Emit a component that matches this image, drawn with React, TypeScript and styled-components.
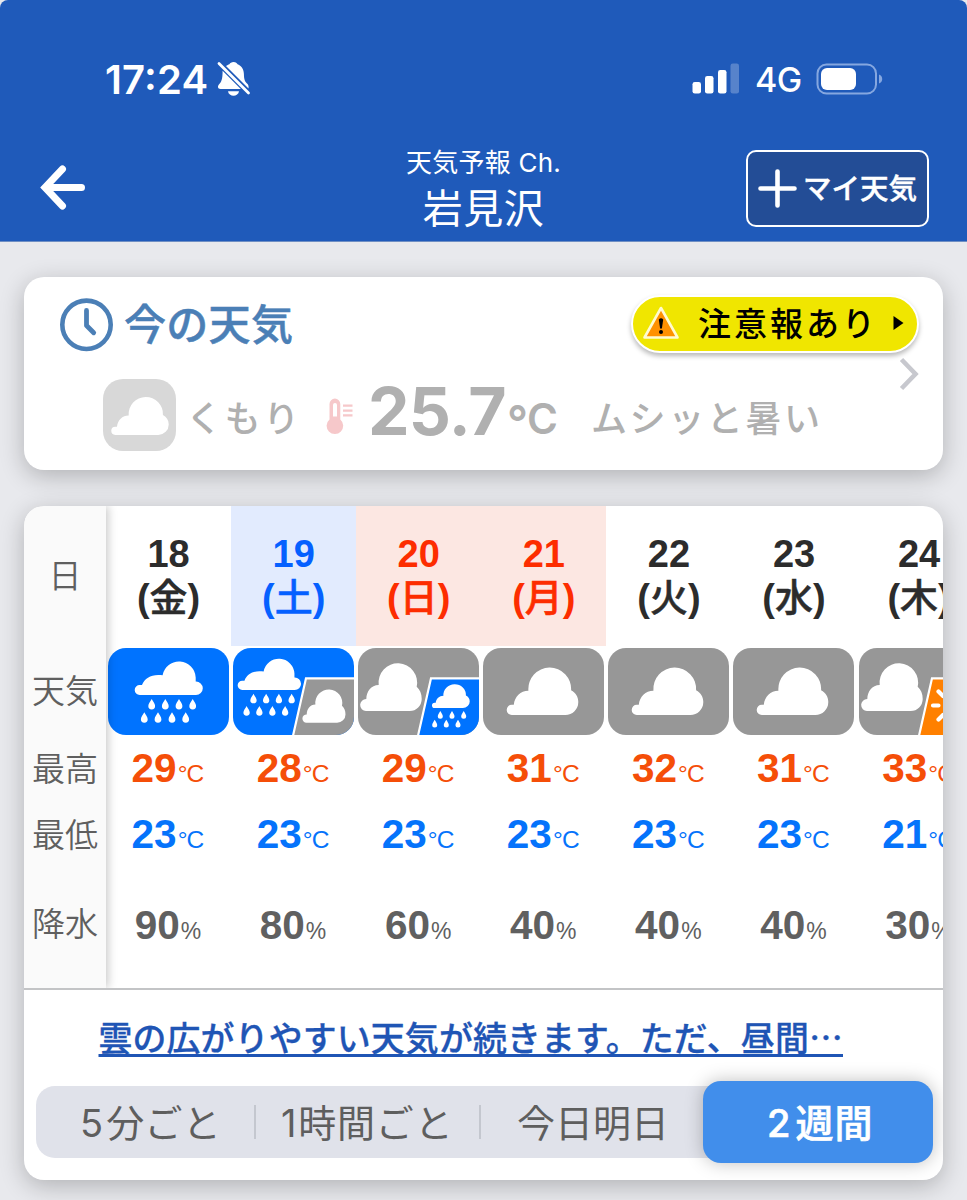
import React from 'react';
import styled, { createGlobalStyle } from 'styled-components';

const GlobalStyle = createGlobalStyle`
  * { box-sizing: border-box; }
  body { margin: 0; background: #e8e9ed; }
`;

const JP = `"Noto Sans CJK JP", sans-serif`;
const LATIN = `Inter, "Noto Sans CJK JP", sans-serif`;
const HELV = `"Liberation Sans", "Noto Sans CJK JP", sans-serif`;

const Screen = styled.div`
  width: 967px;
  height: 1200px;
  overflow: hidden;
  background: #e8e9ed;
  font-family: ${JP};
  white-space: nowrap;
`;

const Header = styled.header`
  height: 242px;
  background: #1f5aba;
  border-bottom: 1px solid #6f8fc4;
  border-radius: 8px 8px 0 0;
  color: #fff;
`;

const StatusBar = styled.div`
  display: flex;
  align-items: center;
  height: 126px;
  padding: 32px 84px 0 105px;
  font-family: ${LATIN};
`;

const Clock = styled.span`
  font-size: 40px;
  font-weight: 600;
  letter-spacing: 0.2px;
  font-feature-settings: "case";
  width: 112px;
`;

const StatusRight = styled.div`
  display: flex;
  align-items: center;
  margin-left: auto;
`;

const Network = styled.span`
  font-size: 34px;
  font-weight: 450;
  width: 46px;
  margin: 0 15px;
  letter-spacing: -0.6px;
`;

const NavBar = styled.div`
  display: grid;
  grid-template-columns: 241px 1fr 241px;
  height: 115px;
`;

const BackButton = styled.button`
  display: flex;
  padding: 37px 0 0 38px;
  border: 0;
  background: none;
`;

const Title = styled.div`
  display: flex;
  flex-direction: column;
  align-items: center;
  padding-top: 20px;
`;

const TitleSub = styled.div`
  font: 400 26px/34px ${LATIN};
  letter-spacing: 0.25px;
`;

const TitleMain = styled.div`
  font: 400 40px/50px ${JP};
  letter-spacing: 0.5px;
  margin-top: 1px;
`;

const AddButton = styled.button`
  display: flex;
  align-items: center;
  gap: 6px;
  width: 183px;
  height: 77px;
  margin: 24px 0 0 20px;
  padding: 0 0 0 10px;
  border: 2px solid #fff;
  border-radius: 10px;
  background: #234d96;
  color: #fff;
  font: 500 28.5px/40px ${JP};
  -webkit-text-stroke: 0.4px currentColor;
`;

const AddText = styled.span`
  padding-bottom: 3px;
`;

const Main = styled.main`
  display: flex;
  flex-direction: column;
  gap: 36px;
  padding: 35px 24px 0;
`;

const Card = styled.section<{ $h: number }>`
  height: ${(p) => p.$h}px;
  border-radius: 20px;
  background: #fff;
  box-shadow: 0 6px 24px rgba(0, 0, 0, 0.24);
  overflow: hidden;
`;

const NowHead = styled.div`
  display: flex;
  align-items: flex-start;
  height: 80px;
  padding: 19px 24px 0 35px;
`;

const NowTitle = styled.h2`
  margin: 0 auto 0 10px;
  font: 500 42px/52px ${JP};
  letter-spacing: 0.3px;
  color: #4b7fb6;
  -webkit-text-stroke: 0.5px currentColor;
`;

const AlertPill = styled.button`
  display: flex;
  align-items: center;
  width: 288px;
  height: 58px;
  border: 2px solid #fff;
  border-radius: 29px;
  background: #f0e600;
  box-shadow: 0 3px 5px rgba(0, 0, 0, 0.28);
  padding: 0 0 2px 9px;
  margin-top: -1px;
  color: #000;
  font: 500 33px/48px ${JP};
`;

const AlertText = styled.span`
  letter-spacing: 3px;
  margin: 0 14px 2px 18px;
`;

const ChevronRow = styled.div`
  display: flex;
  justify-content: flex-end;
  height: 22px;
  padding-right: 24px;
`;

const NowBody = styled.div`
  display: flex;
  align-items: flex-start;
  height: 72px;
  padding-left: 79px;
  color: #b0b0b0;
`;

const NowIcon = styled.div`
  display: flex;
  align-items: center;
  justify-content: center;
  width: 73px;
  height: 72px;
  border-radius: 20px;
  background: #d8d8d8;
`;

const NowWord = styled.span<{ $w: number; $pad?: number }>`
  width: ${(p) => p.$w}px;
  padding-left: ${(p) => p.$pad ?? 0}px;
  font: 500 36px/75px ${JP};
  letter-spacing: 2.6px;
`;

const Thermometer = styled.svg`
  width: 28px;
  height: 38px;
  margin-top: 19px;
`;

const NowTemp = styled.span`
  width: 139px;
  margin-left: 15px;
  font: 700 66px/64px ${LATIN};
  letter-spacing: -0.8px;
`;

const NowUnit = styled.span`
  display: flex;
  width: 84px;
  font: 600 42px/80px ${LATIN};
`;

const Degree = styled.span`
  width: 20px;
  font-size: 46px;
  line-height: 86px;
`;

const Table = styled.div`
  display: flex;
  height: 484px;
  border-bottom: 2px solid #c3c4c6;
`;

const Labels = styled.div`
  position: relative;
  z-index: 1;
  flex: none;
  width: 82px;
  background: #fafafa;
  box-shadow: 2px 0 9px rgba(0, 0, 0, 0.22);
  clip-path: inset(0 -20px 0 0);
`;

const Label = styled.div<{ $h: number }>`
  height: ${(p) => p.$h}px;
  text-align: center;
  font: 350 33px/${(p) => p.$h - 4}px ${JP};
  color: #5f5f5f;
`;

const Days = styled.div`
  display: flex;
  flex: 1;
  overflow: hidden;
`;

const Day = styled.div`
  flex: none;
  width: 125.1px;
`;

const DateCell = styled.div<{ $tone: Tone }>`
  height: 140px;
  padding-top: 27px;
  text-align: center;
  font: 700 38px/43px ${HELV};
  color: ${(p) => tones[p.$tone].fg};
  background: ${(p) => tones[p.$tone].bg};
`;

const Weekday = styled.div`
  height: 43px;
`;

const Kanji = styled.span`
  font-family: ${JP};
  font-weight: 500;
  -webkit-text-stroke: 0.5px currentColor;
  line-height: 1;
`;

const Tile = styled.svg`
  display: block;
  width: 121px;
  height: 87px;
  margin: 2px 0 0 2px;
  border-radius: 18px;
`;

const Value = styled.div<{ $color: string; $h: number; $unit: number }>`
  height: ${(p) => p.$h}px;
  padding-right: 2px;
  text-align: center;
  font: 700 40.5px/${(p) => p.$h - 3}px ${HELV};
  color: ${(p) => p.$color};
  small {
    font-weight: 400;
    font-size: ${(p) => p.$unit}px;
    letter-spacing: -0.8px;
    margin-left: 1px;
  }
`;

const Comment = styled.a`
  display: block;
  height: 96px;
  padding-left: 74.5px;
  font: 500 33.9px/94px ${JP};
  letter-spacing: 0.15px;
  color: #1f55b5;
  -webkit-text-stroke: 0.3px currentColor;
  text-decoration: underline;
  text-decoration-thickness: 2.5px;
  text-underline-offset: 3px;
`;

const Tabs = styled.div`
  display: flex;
  align-items: center;
  width: 897px;
  height: 72px;
  margin-left: 12px;
  border-radius: 19px;
  background: #e0e2ea;
  font: 400 38px/72px ${JP};
  color: #5e5e5e;
`;

const Tab = styled.div<{ $w: number; $pad: number; $ls?: number }>`
  width: ${(p) => p.$w}px;
  height: 72px;
  line-height: 70px;
  padding-left: ${(p) => p.$pad}px;
  letter-spacing: ${(p) => p.$ls ?? 0}px;
`;

const Num = styled.span<{ $gap: number }>`
  font-family: ${LATIN};
  margin-right: ${(p) => p.$gap}px;
`;

const Divider = styled.div`
  width: 2px;
  height: 34px;
  background: #c4c7cf;
`;

const ActiveTab = styled.div`
  flex: none;
  width: 230px;
  height: 82px;
  margin-left: auto;
  border-radius: 18px;
  background: #418eeb;
  box-shadow: 0 0 18px rgba(0, 0, 0, 0.25);
  color: #fff;
  font-weight: 500;
  letter-spacing: 1px;
  line-height: 80px;
  padding-left: 64px;
  -webkit-text-stroke: 0.6px currentColor;
`;

type Tone = 'plain' | 'sat' | 'sun';
const tones: Record<Tone, { fg: string; bg: string }> = {
  plain: { fg: '#2c2c2c', bg: 'transparent' },
  sat: { fg: '#0560ff', bg: '#e2ebfe' },
  sun: { fg: '#fd2d00', bg: '#fce7e2' },
};

const BLUE = '#0073ff';
const GRAY = '#979797';
const ORANGE = '#ff8000';

const cloudPath =
  'M28.8 67A5.1 5.1 0 0 1 28.8 56.8L30.8 56.8C31.6 48.5 37.5 42.7 45.4 42.7A21.4 21.4 0 1 1 88.1 42.2C92.8 44.6 95.3 49 95.3 54A13 13 0 0 1 82.3 67Z';
const tallCloudPath =
  'M8 63A6 6 0 0 1 8.3 51C8.5 43.5 13 37.2 20.7 37A19.3 19.3 0 1 1 58.7 38.8C62 41.8 63.7 46 63.7 51A12 12 0 0 1 51.7 63Z';
const flatCloudPath =
  'M31.7 47A5 5 0 0 1 31.7 37L34 37C37 29.5 44 25.7 54.6 27.2A16.7 16.7 0 0 1 87.7 29.4L87.7 33.6A6.8 6.8 0 0 1 94.8 40.3A6.8 6.8 0 0 1 88 47Z';

const Drop = ({ x, y, s = 1 }: { x: number; y: number; s?: number }) => (
  <path
    transform={`translate(${x} ${y}) scale(${s})`}
    d="M0 0C1.2 2.6 3.4 4.6 3.4 7A3.4 3.4 0 0 1 -3.4 7C-3.4 4.6 -1.2 2.6 0 0Z"
  />
);

const Rain = () => (
  <g fill="#fff">
    <path d={flatCloudPath} />
    {[43.7, 57.3, 71, 84.7].map((x) => <Drop key={x} x={x} y={51} />)}
    {[36.3, 50, 64, 77.7].map((x) => <Drop key={x} x={x} y={64.3} />)}
  </g>
);

const Split = ({ color, children }: { color: string; children: React.ReactNode }) => (
  <>
    <path d="M73 30.3H124V90H59.5Z" fill={color} stroke="#fff" strokeWidth="2.2" />
    {children}
  </>
);

type Kind = 'rain' | 'rainCloud' | 'cloudRain' | 'cloud' | 'cloudSun';

const WeatherTile = ({ kind }: { kind: Kind }) => (
  <Tile viewBox="0 0 121 87">
    <rect width="121" height="87" fill={kind.startsWith('rain') ? BLUE : GRAY} />
    {kind === 'rain' && <Rain />}
    {kind === 'cloud' && <path d={cloudPath} fill="#fff" />}
    {kind === 'rainCloud' && (
      <>
        <g transform="translate(-20.2 -1.8) scale(.931)"><Rain /></g>
        <Split color={GRAY}>
          <path d={tallCloudPath} fill="#fff" transform="translate(67.9 30.7) scale(.7)" />
        </Split>
      </>
    )}
    {kind === 'cloudRain' && (
      <>
        <path d={tallCloudPath} fill="#fff" />
        <Split color={BLUE}>
          <g fill="#fff">
            <path d={cloudPath} transform="translate(61.5 26.3) scale(.527 .503)" />
            {[82.3, 94, 105.7].map((x) => <Drop key={x} x={x} y={63} s={0.74} />)}
            {[76.7, 88.3, 100].map((x) => <Drop key={x} x={x} y={71.7} s={0.74} />)}
          </g>
        </Split>
      </>
    )}
    {kind === 'cloudSun' && (
      <>
        <path d={tallCloudPath} fill="#fff" />
        <Split color={ORANGE}>
          <circle cx="94.5" cy="57.5" r="8" fill="#fff" />
          <path
            d="M74 57.5H79.5M79.5 43.5L84 48M79.5 71.5L84 67"
            stroke="#fff" strokeWidth="4.2" strokeLinecap="round" fill="none"
          />
        </Split>
      </>
    )}
  </Tile>
);

const days: { n: number; w: string; tone: Tone; kind: Kind; hi: number; lo: number; p: number }[] = [
  { n: 18, w: '金', tone: 'plain', kind: 'rain', hi: 29, lo: 23, p: 90 },
  { n: 19, w: '土', tone: 'sat', kind: 'rainCloud', hi: 28, lo: 23, p: 80 },
  { n: 20, w: '日', tone: 'sun', kind: 'cloudRain', hi: 29, lo: 23, p: 60 },
  { n: 21, w: '月', tone: 'sun', kind: 'cloud', hi: 31, lo: 23, p: 40 },
  { n: 22, w: '火', tone: 'plain', kind: 'cloud', hi: 32, lo: 23, p: 40 },
  { n: 23, w: '水', tone: 'plain', kind: 'cloud', hi: 31, lo: 23, p: 40 },
  { n: 24, w: '木', tone: 'plain', kind: 'cloudSun', hi: 33, lo: 21, p: 30 },
];

const BellOff = () => (
  <svg width="34" height="36" viewBox="0 0 34 36" fill="#fff">
    <path d="M16.5 1C18.8 1 20 2.2 20.6 3.3C25 5 26.8 8.8 26.9 13C27 19 28 20.5 30 22.5C31.6 24 31.8 25 31.5 27.5L9 5C10.2 4 11.3 3.6 12.4 3.200C13.200 2 14.500 1 16.500 1Z" />
    <path d="M5.600 9.800L23.800 28H3.500C.6 28 .4 25.300 1.900 23.600C4.500 20.700 5.600 18.500 5.600 9.800Z" />
    <path d="M11 30.300H22C21.300 36.200 11.700 36.200 11 30.300Z" />
    <path d="M2 2.500L31.500 32" stroke="#fff" strokeWidth="2.800" strokeLinecap="round" />
  </svg>
);

const Signal = () => (
  <svg width="48" height="32" viewBox="0 0 48 32" fill="#fff">
    <rect x="0.500" y="19" width="8.500" height="11.500" rx="2.300" />
    <rect x="13" y="13" width="8.500" height="17.500" rx="2.300" />
    <rect x="26" y="7" width="8.500" height="23.500" rx="2.300" />
    <rect x="38.500" y="0.500" width="8.500" height="30" rx="2.300" opacity=".25" />
  </svg>
);

const Battery = () => (
  <svg width="67" height="32" viewBox="0 0 67 32">
    <rect x="1.500" y="1.500" width="58.500" height="29" rx="9" fill="none" stroke="#85a7e0" strokeWidth="2" />
    <rect x="5" y="5" width="35" height="22" rx="6" fill="#fff" />
    <path d="M63 11.500C67.300 12.500 67.300 19.500 63 20.500Z" fill="#85a7e0" />
  </svg>
);

export default function App() {
  return (
    <Screen>
      <GlobalStyle />
      <Header>
        <StatusBar>
          <Clock>17:24</Clock>
          <BellOff />
          <StatusRight>
            <Signal />
            <Network>4G</Network>
            <Battery />
          </StatusRight>
        </StatusBar>
        <NavBar>
          <BackButton aria-label="戻る">
            <svg width="50" height="50" viewBox="0 0 50 50" fill="none" stroke="#fff" strokeWidth="7" strokeLinecap="round" strokeLinejoin="miter">
              <path d="M24.500 6L7 24.500L24.500 43M9 24.500H43.500" />
            </svg>
          </BackButton>
          <Title>
            <TitleSub>天気予報 Ch.</TitleSub>
            <TitleMain>岩見沢</TitleMain>
          </Title>
          <AddButton>
            <svg width="39" height="39" viewBox="0 0 39 39" stroke="#fff" strokeWidth="4.600" strokeLinecap="round">
              <path d="M19.500 2.500V36.500M2.500 19.500H36.500" />
            </svg>
            <AddText>マイ天気</AddText>
          </AddButton>
        </NavBar>
      </Header>
      <Main>
        <Card $h={193}>
          <NowHead>
            <svg width="55" height="56" viewBox="0 0 55 56" fill="none" stroke="#4b7fb6">
              <circle cx="27.500" cy="28.800" r="24.200" strokeWidth="4.600" />
              <path d="M27.500 14.500V29.500L34.700 36.800" strokeWidth="4.800" strokeLinecap="round" strokeLinejoin="round" />
            </svg>
            <NowTitle>今の天気</NowTitle>
            <AlertPill>
              <svg width="38" height="36" viewBox="0 0 38 36">
                <path d="M19 3L35.500 32.500H2.500Z" fill="#ff9100" stroke="#fffbd0" strokeWidth="2.600" strokeLinejoin="round" />
                <path d="M16.800 14.500Q19 12 21.200 14.500L19.900 23.500H18.100Z" />
                <circle cx="19" cy="27" r="2" />
              </svg>
              <AlertText>注意報あり</AlertText>
              <svg width="12" height="16" viewBox="0 0 12 16"><path d="M1.500 1L11.500 8L1.500 15Z" /></svg>
            </AlertPill>
          </NowHead>
          <ChevronRow>
            <svg width="20" height="34" viewBox="0 0 20 34" fill="none" stroke="#c7c8ce" strokeWidth="4.600">
              <path d="M2.500 2.500L16.500 17L2.500 31.500" />
            </svg>
          </ChevronRow>
          <NowBody>
            <NowIcon>
              <svg width="58" height="39" viewBox="23.500 18.500 72 48.600"><path d={cloudPath} fill="#fff" /></svg>
            </NowIcon>
            <NowWord $w={149} $pad={10}>くもり</NowWord>
            <Thermometer viewBox="0 0 28 38" fill="#f6c8ca">
              <path fillRule="evenodd" d="M4.500 6A5.400 5.400 0 0 1 15.300 6V21.500A8.300 8.300 0 1 1 4.500 21.500ZM8 7V18.500H12V7A2 2 0 0 0 8 7Z" />
              <path d="M18 6.500H27.500V8.700H18ZM18 11.500H27.500V13.700H18ZM18 16.200H27.500V18.400H18Z" />
            </Thermometer>
            <NowTemp>25.7</NowTemp>
            <NowUnit><Degree>°</Degree>C</NowUnit>
            <NowWord $w={250}>ムシッと暑い</NowWord>
          </NowBody>
        </Card>
        <Card $h={674}>
          <Table>
            <Labels>
              <Label $h={140}>日</Label>
              <Label $h={91}>天気</Label>
              <Label $h={65}>最高</Label>
              <Label $h={66}>最低</Label>
              <Label $h={112}>降水</Label>
            </Labels>
            <Days>
              {days.map((d) => (
                <Day key={d.n}>
                  <DateCell $tone={d.tone}>
                    {d.n}
                    <Weekday>(<Kanji>{d.w}</Kanji>)</Weekday>
                  </DateCell>
                  <WeatherTile kind={d.kind} />
                  <Value $color="#f54e08" $h={69} $unit={24.5}>{d.hi}<small>°C</small></Value>
                  <Value $color="#0573fb" $h={64} $unit={24.5}>{d.lo}<small>°C</small></Value>
                  <Value $color="#606060" $h={117} $unit={23}>{d.p}<small>%</small></Value>
                </Day>
              ))}
            </Days>
          </Table>
          <Comment>雲の広がりやすい天気が続きます。ただ、昼間…</Comment>
          <Tabs>
            <Tab $w={218} $pad={44} $ls={0.2}><Num $gap={3}>5</Num>分ごと</Tab>
            <Divider />
            <Tab $w={223} $pad={25} $ls={0.8}><Num $gap={1}>1</Num>時間ごと</Tab>
            <Divider />
            <Tab $w={222} $pad={36}>今日明日</Tab>
            <ActiveTab><Num $gap={4}>2</Num>週間</ActiveTab>
          </Tabs>
        </Card>
      </Main>
    </Screen>
  );
}
